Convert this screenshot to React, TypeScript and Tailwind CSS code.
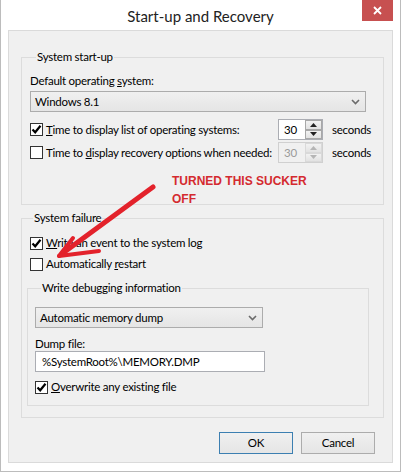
import React from 'react';

const font = { fontFamily: 'Lato, "Noto Sans", sans-serif' };

const Check: React.FC<{ checked?: boolean }> = ({ checked }) => (
    <span className="flex h-[13px] w-[13px] shrink-0 items-center justify-center border border-[#333333] bg-white">
        {checked && (
            <svg width="11" height="11" viewBox="0 0 11 11">
                <path d="M1.5 5.5 L4.2 8.3 L9.5 1.8" fill="none" stroke="#000" strokeWidth="2.2" />
            </svg>
        )}
    </span>
);

const Chevron = () => (
    <svg width="9" height="6" viewBox="0 0 9 6">
        <path d="M1 1 L4.5 4.5 L8 1" fill="none" stroke="#6b6b6b" strokeWidth="1.6" />
    </svg>
);

const Spin: React.FC<{ disabled?: boolean }> = ({ disabled }) => (
    <div
        className={
            'flex h-[21px] w-[45px] shrink-0 border ' +
            (disabled ? 'border-[#d0d0d0] bg-[#f0f0f0]' : 'border-[#abadb3] bg-white')
        }
    >
        <span className={'flex-1 pl-[5px] leading-[19px] ' + (disabled ? 'text-[#9a9a9a]' : 'text-black')}>30</span>
        <div className="flex w-[17px] flex-col">
            {[0, 1].map((i) => (
                <span
                    key={i}
                    className={
                        'flex h-[9.5px] items-center justify-center border bg-gradient-to-b from-[#f2f2f2] to-[#e2e2e2] ' +
                        (disabled ? 'border-[#d9d9d9]' : 'border-[#a8a8a8]')
                    }
                >
                    <svg width="7" height="4" viewBox="0 0 7 4">
                        <path
                            d={i === 0 ? 'M0 4 L3.5 0 L7 4 Z' : 'M0 0 L3.5 4 L7 0 Z'}
                            fill={disabled ? '#b5b5b5' : '#222'}
                        />
                    </svg>
                </span>
            ))}
        </div>
    </div>
);

const Select: React.FC<{ value: string; width: string }> = ({ value, width }) => (
    <div
        className={
            'flex h-[21px] items-center justify-between border border-[#acacac] bg-gradient-to-b from-[#f0f0f0] to-[#e5e5e5] pl-[4px] pr-[5px] ' +
            width
        }
    >
        <span>{value}</span>
        <Chevron />
    </div>
);

const Btn: React.FC<{ label: string; primary?: boolean }> = ({ label, primary }) => (
    <button
        className={
            'h-[22px] w-[74px] border bg-gradient-to-b from-[#f0f0f0] to-[#e5e5e5] text-black ' +
            (primary ? 'border-[#3c7fb1]' : 'border-[#acacac]')
        }
    >
        {label}
    </button>
);

export default function App() {
    return (
        <div
            className="relative flex h-[472px] w-[401px] flex-col border-x border-b border-[#bcbcbc] bg-white text-[11.5px] leading-[16px] tracking-[-0.25px] text-black"
            style={font}
        >
            {/* title bar */}
            <div className="flex h-[30px] items-start px-[7px]">
                <div className="w-[31px]" />
                <div className="flex-1 pt-[6px] text-center text-[15px] leading-[20px] tracking-normal text-[#222]">
                    Start-up and Recovery
                </div>
                <div className="flex h-[21px] w-[31px] items-center justify-center bg-[#c75050] text-white">
                    <svg width="9" height="9" viewBox="0 0 9 9">
                        <path d="M1 1 L8 8 M8 1 L1 8" stroke="#fff" strokeWidth="1.8" />
                    </svg>
                </div>
            </div>

            {/* client area */}
            <div className="mx-[7px] flex h-[433px] flex-col border border-[#dadada] bg-[#f0f0f0] px-[12px] pt-[18px]">
                <fieldset className="w-[363px] border border-[#dcdcdc] pb-[41px] pl-[8px]">
                    <legend className="ml-[6px] px-[1px]">System start-up</legend>
                    <div className="mt-[8px]">
                        Default operating <u>s</u>ystem:
                    </div>
                    <div className="mt-[2px]">
                        <Select value="Windows 8.1" width="w-[336px]" />
                    </div>
                    <div className="mt-[7px] flex h-[21px] items-center whitespace-nowrap">
                        <div className="flex w-[248px] items-center gap-[3px]">
                            <Check checked />
                            <span>
                                <u>T</u>ime to display list of operating systems:
                            </span>
                        </div>
                        <Spin />
                        <span className="ml-[9px]">seconds</span>
                    </div>
                    <div className="mt-[2px] flex h-[21px] items-center whitespace-nowrap">
                        <div className="flex w-[248px] items-center gap-[3px]">
                            <Check />
                            <span>
                                Time to <u>d</u>isplay recovery options when needed:
                            </span>
                        </div>
                        <Spin disabled />
                        <span className="ml-[9px]">seconds</span>
                    </div>
                </fieldset>

                <fieldset className="mt-[5px] w-[363px] border border-[#dcdcdc] pb-[11px] pl-[5px] pr-[14px]">
                    <legend className="ml-[6px] px-[1px]">System failure</legend>
                    <div className="mt-[9px] flex items-center gap-[3px] pl-[3px]">
                        <Check checked />
                        <span>
                            <u>W</u>rite an event to the system log
                        </span>
                    </div>
                    <div className="mt-[5px] flex items-center gap-[3px] pl-[3px]">
                        <Check />
                        <span>
                            Automatically <u>r</u>estart
                        </span>
                    </div>

                    <fieldset className="mt-[8px] border border-[#dcdcdc] pb-[10px] pl-[7px]">
                        <legend className="ml-[6px] px-[1px]">Write debugging information</legend>
                        <div className="mt-[11px]">
                            <Select value="Automatic memory dump" width="w-[228px]" />
                        </div>
                        <div className="mt-[9px] leading-[14px]">Dump file:</div>
                        <div className="flex h-[21px] w-[230px] items-center border border-[#abadb3] bg-white pl-[6px]">
                            %SystemRoot%\MEMORY.DMP
                        </div>
                        <div className="mt-[7px] flex items-center gap-[3px]">
                            <Check checked />
                            <span>
                                <u>O</u>verwrite any existing file
                            </span>
                        </div>
                    </fieldset>
                </fieldset>

                <div className="mt-[14px] flex justify-end gap-[8px] pr-[5px]">
                    <Btn label="OK" primary />
                    <Btn label="Cancel" />
                </div>
            </div>

            {/* annotation overlay */}
            <div
                className="absolute left-[171px] top-[172px] text-[12px] font-bold leading-[18px] tracking-normal text-[#d42a2f]"
                style={{ fontFamily: '"Liberation Sans", Arial, sans-serif' }}
            >
                TURNED THIS SUCKER
                <br />
                OFF
            </div>
            <svg className="pointer-events-none absolute left-0 top-0" width="401" height="472">
                <g stroke="#e3222b" strokeLinecap="round" fill="none">
                    <path d="M152 187 L62 253" strokeWidth="5" />
                    <path d="M58 256 L72 238" strokeWidth="4" />
                    <path d="M58 256 L98 251" strokeWidth="4" />
                </g>
            </svg>
        </div>
    );
}
